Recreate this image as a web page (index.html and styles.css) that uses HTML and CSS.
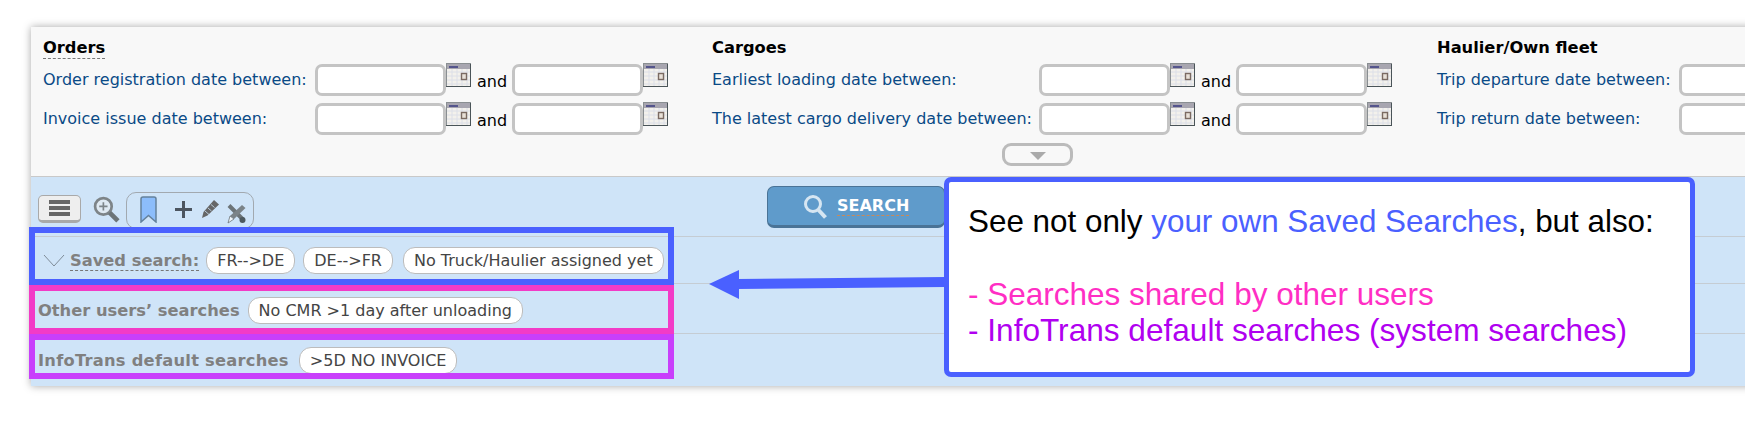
FILE: index.html
```html
<!DOCTYPE html>
<html lang="en">
<head>
  <meta charset="UTF-8">
  <title>Saved searches</title>
  <meta name="viewport" content="width=device-width, initial-scale=1">
  <link rel="stylesheet" href="styles.css">
</head>
<body>
  <svg class="defs" width="0" height="0">
    <symbol id="cal" viewBox="0 0 25 24">
      <rect x="0.5" y="0.5" width="24" height="23" fill="#f3f1ec" stroke="#8a8f92"/>
      <rect x="1" y="1" width="23" height="5" fill="#a8a6b0"/>
      <rect x="3" y="3" width="9" height="2" fill="#55558c"/>
      <path d="M1 9h23M1 13h23M1 17h23M1 21h23M6 6v17M11 6v17M16 6v17M21 6v17" stroke="#dcdfe8" stroke-width="1"/>
      <rect x="15.500" y="10.500" width="5" height="6" fill="#e8e0d8" stroke="#7a6a62" stroke-width="1.400"/>
      <path d="M0 23.500h25M24.500 1v23" stroke="#4a5458"/>
    </symbol>
  </svg>

  <div class="panel">
    <div class="filters">
      <div class="group orders">
        <div class="group-title"><span class="dotted">Orders</span></div>
        <div class="date-row">
          <label>Order registration date between:</label>
          <input type="text"><svg class="cal"><use href="#cal"/></svg><span class="and">and</span>
          <input type="text"><svg class="cal"><use href="#cal"/></svg>
        </div>
        <div class="date-row">
          <label>Invoice issue date between:</label>
          <input type="text"><svg class="cal"><use href="#cal"/></svg><span class="and">and</span>
          <input type="text"><svg class="cal"><use href="#cal"/></svg>
        </div>
      </div>
      <div class="group cargoes">
        <div class="group-title">Cargoes</div>
        <div class="date-row">
          <label>Earliest loading date between:</label>
          <input type="text"><svg class="cal"><use href="#cal"/></svg><span class="and">and</span>
          <input type="text"><svg class="cal"><use href="#cal"/></svg>
        </div>
        <div class="date-row">
          <label>The latest cargo delivery date between:</label>
          <input type="text"><svg class="cal"><use href="#cal"/></svg><span class="and">and</span>
          <input type="text"><svg class="cal"><use href="#cal"/></svg>
        </div>
        <button class="expand" type="button"><span class="tri"></span></button>
      </div>
      <div class="group haulier">
        <div class="group-title">Haulier/Own fleet</div>
        <div class="date-row">
          <label>Trip departure date between:</label>
          <input type="text">
        </div>
        <div class="date-row">
          <label>Trip return date between:</label>
          <input type="text">
        </div>
      </div>
    </div>

    <div class="results">
      <div class="toolbar">
        <button class="menu-btn" type="button"><span></span><span></span><span></span></button>
        <svg class="zoom-icon" width="27" height="27" viewBox="0 0 26 26">
          <circle cx="10" cy="10" r="8" fill="#dfe9f2" stroke="#7d8488" stroke-width="2.600"/>
          <path d="M6 10h8M10 6v8" stroke="#7d8488" stroke-width="1.600"/>
          <path d="M16 16l8 8" stroke="#6c7478" stroke-width="4.500"/>
        </svg>
        <div class="bookmarks">
          <svg width="19" height="27" viewBox="0 0 19 27">
            <path d="M2 3q0-2 2-2h11q2 0 2 2v23l-7.500-6.500L2 26z" fill="#8cbdfb" stroke="#64819c" stroke-width="1.500"/>
          </svg>
          <svg class="plus" width="17" height="17" viewBox="0 0 17 17">
            <path d="M8.500 0v17M0 8.500h17" stroke="#4c5560" stroke-width="3"/>
          </svg>
          <svg class="pencil" width="19" height="22" viewBox="0 0 19 22">
            <path d="M1 20l1.500-6L13 2l5 4.500L6.500 17.500z" fill="#666"/>
            <path d="M4 13l4 3.500M7 10l3.500 3M10 6.500l3.500 3" stroke="#cfe4f8" stroke-width="0.800"/>
          </svg>
          <svg class="tools" width="19" height="20" viewBox="0 0 19 20">
            <path d="M2 1.500l14 14" stroke="#6c7478" stroke-width="4"/>
            <circle cx="15.500" cy="16" r="3" fill="#4e5a60"/>
            <path d="M15 1l3.500 3L7 15l-4-3z" fill="#7b8388"/>
            <path d="M3 12l4 3-6 4z" fill="#f0f5f9" stroke="#6c7478" stroke-width="0.800"/>
          </svg>
        </div>
        <button class="search-btn" type="button">
          <svg width="24" height="25" viewBox="0 0 24 25">
            <circle cx="10" cy="10" r="7.500" fill="none" stroke="#d6e6f2" stroke-width="3"/>
            <path d="M15.500 16l7 7.500" stroke="#d6e6f2" stroke-width="4"/>
          </svg>
          <span class="search-label">SEARCH</span>
        </button>
      </div>

      <div class="search-row saved-row">
        <svg class="chevron" width="22" height="13" viewBox="0 0 22 13">
          <path d="M1 1l10 11L21 1" fill="none" stroke="#7f8c98" stroke-width="1"/>
        </svg>
        <span class="row-title dashed">Saved search:</span>
        <span class="pill">FR--&gt;DE</span>
        <span class="pill">DE--&gt;FR</span>
        <span class="pill">No Truck/Haulier assigned yet</span>
      </div>
      <div class="search-row other-row">
        <span class="row-title">Other users’ searches</span>
        <span class="pill">No CMR &gt;1 day after unloading</span>
      </div>
      <div class="search-row default-row">
        <span class="row-title">InfoTrans default searches</span>
        <span class="pill">&gt;5D NO INVOICE</span>
      </div>
    </div>
  </div>

  <!-- annotations drawn over the screenshot -->
  <div class="mark mark-blue"></div>
  <div class="mark mark-pink"></div>
  <div class="mark mark-purple"></div>
  <svg class="arrow" width="240" height="34" viewBox="0 0 240 34">
    <path d="M28 17L236 15" stroke="#4a60ff" stroke-width="10" fill="none"/>
    <path d="M0 17L30 3v29z" fill="#4a60ff"/>
  </svg>
  <div class="callout">
    <p>See not only <span class="c-blue">your own Saved Searches</span>, but also:</p>
    <p>&nbsp;</p>
    <p class="c-pink">- Searches shared by other users</p>
    <p class="c-purple">- InfoTrans default searches (system searches)</p>
  </div>
</body>
</html>
```

FILE: styles.css
```css
* {
  box-sizing: border-box;
}

html, body {
  overflow: hidden;
}

body {
  margin: 0;
  height: 426px;
  background: #fff;
  font-family: "DejaVu Sans", sans-serif;
  font-size: 16px;
  position: relative;
}

.defs {
  position: absolute;
}

.panel {
  margin: 27px 0 0 31px;
  height: 359px;
  width: 1760px;
  box-shadow: 0 0 8px rgba(0, 0, 0, 0.35);
  background: #f8f8f8;
}

.filters {
  height: 150px;
  display: flex;
  border-bottom: 1px solid #c9c9c9;
}

.group {
  padding-top: 11px;
  flex: none;
}

.orders {
  width: 669px;
  padding-left: 12px;
}

.cargoes {
  width: 725px;
  position: relative;
  padding-left: 12px;
}

.haulier {
  padding-left: 12px;
}

.group-title {
  font-weight: bold;
  font-size: 16.300px;
  color: #000;
  height: 20px;
  line-height: 20px;
  margin-bottom: 6px;
}

.dotted {
  display: inline-block;
  border-bottom: 1px dashed #777;
  line-height: 20px;
}

.date-row {
  display: flex;
  align-items: flex-start;
  height: 39px;
}

.date-row label {
  color: #0a4a86;
  line-height: 32px;
  flex: none;
}

.orders label {
  width: 272px;
}

.cargoes label {
  width: 327px;
}

.haulier label {
  width: 242px;
}

.date-row input {
  width: 131px;
  height: 32px;
  flex: none;
  border: 3px solid #c4c4c4;
  border-radius: 7px;
  background: #fff;
  padding: 0;
}

.cal {
  width: 25px;
  height: 24px;
  margin-top: -1px;
  flex: none;
}

.and {
  width: 41px;
  padding-left: 6px;
  line-height: 35px;
  color: #000;
  flex: none;
}

.expand {
  position: absolute;
  left: 302px;
  top: 116px;
  width: 71px;
  height: 23px;
  background: #f8f8f8;
  border: 3px solid #bbb;
  border-radius: 9px;
  padding: 0;
  display: flex;
  align-items: center;
  justify-content: center;
}

.tri {
  border-left: 8px solid transparent;
  border-right: 8px solid transparent;
  border-top: 8px solid #aaa;
  margin-top: 2px;
}

.results {
  height: 209px;
  background: #cfe4f8;
}

.toolbar {
  height: 60px;
  display: flex;
  align-items: flex-start;
  padding-top: 15px;
  padding-left: 7px;
  border-bottom: 1px solid #c5ccd3;
}

.menu-btn {
  width: 43px;
  height: 28px;
  margin-top: 3px;
  flex: none;
  background: #eeeeee;
  border: 1px solid #a9a9a9;
  border-bottom: 3px solid #a9a9a9;
  border-radius: 5px;
  padding: 4px 0 0;
  display: flex;
  flex-direction: column;
  align-items: center;
  gap: 2px;
}

.menu-btn span {
  width: 21px;
  height: 4px;
  background: #666;
}

.zoom-icon {
  margin: 4px 0 0 12px;
  flex: none;
}

.bookmarks {
  width: 128px;
  height: 37px;
  margin-left: 6px;
  flex: none;
  border: 1px solid #a2a9b0;
  border-radius: 10px;
  display: flex;
  align-items: flex-start;
  padding: 3px 0 0 12px;
}

.plus {
  margin: 5px 0 0 17px;
}

.pencil {
  margin: 2px 0 0 9px;
}

.tools {
  margin: 8px 0 0 7px;
}

.search-btn {
  width: 178px;
  height: 42px;
  margin: -6px 0 0 513px;
  flex: none;
  background: #5f9bcb;
  border: 1px solid #4a7396;
  border-bottom: 3px solid #4a7396;
  border-radius: 7px;
  display: flex;
  align-items: center;
  padding: 0 0 0 35px;
  gap: 10px;
}

.search-label {
  color: #fff;
  font-family: "DejaVu Sans", sans-serif;
  font-weight: bold;
  font-size: 16px;
  border-bottom: 1px dashed #c88a5a;
}

.search-row {
  display: flex;
  align-items: center;
  padding-left: 7px;
  border-bottom: 1px solid #c5ccd3;
}

.saved-row {
  height: 47px;
  padding-left: 12px;
  padding-top: 1px;
}

.other-row {
  height: 50px;
  padding-top: 4px;
}

.default-row {
  height: 52px;
  border-bottom: 0;
  padding-top: 1px;
}

.row-title {
  font-weight: bold;
  font-size: 16.300px;
  color: #808080;
}

.default-row .row-title {
  letter-spacing: 0.25px;
}

.dashed {
  border-bottom: 1px dashed #777;
  margin-left: 5px;
}

.pill {
  height: 27px;
  line-height: 25px;
  padding: 0 10px;
  background: #fff;
  border: 1px solid #bcbcbc;
  border-radius: 12px;
  color: #444;
  flex: none;
}

.saved-row .pill {
  margin-left: 8px;
}

.saved-row .dashed + .pill {
  margin-left: 7px;
}

.saved-row .pill:last-child {
  margin-left: 10px;
}

.other-row .pill {
  margin-left: 8px;
}

.default-row .pill {
  margin-left: 10px;
}

/* annotations */
.mark {
  position: absolute;
  border: 6px solid;
}

.mark-blue {
  left: 29px;
  top: 227px;
  width: 645px;
  height: 58px;
  border-color: #4a60ff;
}

.mark-pink {
  left: 29px;
  top: 285px;
  width: 645px;
  height: 49px;
  border-color: #f23bc7;
}

.mark-purple {
  left: 29px;
  top: 334px;
  width: 645px;
  height: 45px;
  border-color: #c83ffb;
}

.arrow {
  position: absolute;
  left: 709px;
  top: 267px;
}

.callout {
  position: absolute;
  left: 944px;
  top: 177px;
  width: 751px;
  height: 200px;
  padding: 22px 0 0 19px;
  background: #fff;
  border: 5px solid #4a60ff;
  border-radius: 7px;
  font-family: "Liberation Sans", sans-serif;
  font-size: 31.400px;
  line-height: 36px;
  color: #000;
}

.callout p {
  margin: 0;
}

.c-blue {
  color: #4a60ff;
}

.c-pink {
  color: #ff2ec4;
  font-size: 31.500px;
}

.c-purple {
  color: #b000f0;
  font-size: 31.600px;
}
```
